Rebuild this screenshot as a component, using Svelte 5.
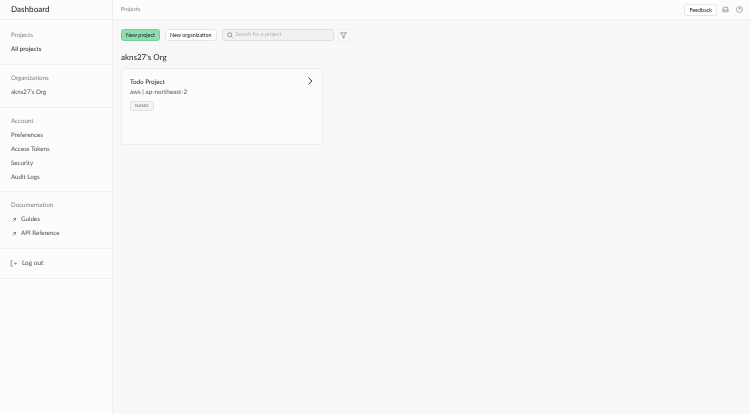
<script>
  const sections = [
    { title: 'Projects', items: [{ label: 'All projects', active: true }] },
    { title: 'Organizations', items: [{ label: "akns27's Org" }] },
    {
      title: 'Account',
      items: [{ label: 'Preferences' }, { label: 'Access Tokens' }, { label: 'Security' }, { label: 'Audit Logs' }],
    },
    {
      title: 'Documentation',
      items: [
        { label: 'Guides', external: true },
        { label: 'API Reference', external: true },
      ],
    },
  ]
</script>

<div class="layout">
  <aside class="sidebar">
    <div class="brand">Dashboard</div>
    {#each sections as section (section.title)}
      <section class="nav-section">
        <div class="nav-title">{section.title}</div>
        {#each section.items as item (item.label)}
          <div class="nav-item" class:active={item.active}>
            {#if item.external}
              <svg class="ext" width="4" height="4" viewBox="0 0 10 10" fill="none" stroke="currentColor" stroke-width="1.6">
                <path d="M1 9 9 1M3 1h6v6" />
              </svg>
            {/if}
            {item.label}
          </div>
        {/each}
      </section>
    {/each}
    <section class="logout">
      <svg width="7" height="7" viewBox="0 0 24 24" fill="none" stroke="currentColor" stroke-width="2">
        <path d="M9 3H4v18h5M14 12h8M18 8l4 4-4 4" />
      </svg>
      <span>Log out</span>
    </section>
  </aside>

  <div class="content">
    <header class="topbar">
      <span class="crumb">Projects</span>
      <div class="top-actions">
        <button class="btn feedback">Feedback</button>
        <svg width="7" height="7" viewBox="0 0 24 24" fill="none" stroke="#707070" stroke-width="2">
          <path d="M3 13 6 4h12l3 9v7H3zM3 13h6l1 3h4l1-3h6" />
        </svg>
        <svg width="7" height="7" viewBox="0 0 24 24" fill="none" stroke="#707070" stroke-width="2">
          <circle cx="12" cy="12" r="10" />
          <path d="M9.500 9.500a2.500 2.500 0 1 1 3.500 2.300c-.7.4-1 .9-1 1.700M12 17h.01" />
        </svg>
      </div>
    </header>

    <main class="page">
      <div class="toolbar">
        <button class="btn primary">New project</button>
        <button class="btn">New organization</button>
        <div class="search">
          <svg width="6" height="6" viewBox="0 0 24 24" fill="none" stroke="#666" stroke-width="2.400">
            <circle cx="11" cy="11" r="8" />
            <path d="m17 17 5 5" />
          </svg>
          <span>Search for a project</span>
        </div>
        <button class="btn filter" aria-label="Filter">
          <svg width="7" height="7" viewBox="0 0 24 24" fill="none" stroke="#555" stroke-width="2">
            <path d="M2 3h20l-8 9.500V21l-4-2v-6.500z" />
          </svg>
        </button>
      </div>

      <h2 class="org">akns27's Org</h2>

      <div class="card">
        <div class="card-head">
          <div class="card-name">Todo Project</div>
          <svg class="chevron" width="6" height="8" viewBox="0 0 6 8" fill="none" stroke="#333" stroke-width="1">
            <path d="m1.500.6 3.400 3.400-3.400 3.400" />
          </svg>
        </div>
        <div class="card-region">aws | ap-northeast-2</div>
        <span class="badge">NANO</span>
      </div>
    </main>
  </div>
</div>

<style>
  :global(body) {
    font-family: Lato, "Liberation Sans", sans-serif;
    color: #1c1c1c;
    text-rendering: geometricPrecision;
  }
  .layout {
    display: flex;
    width: 750px;
    height: 414px;
    overflow: hidden;
    background: #f8f8f8;
    /* the source is a downscaled capture, so everything is a little soft */
    filter: blur(0.3px);
  }
  .sidebar {
    width: 113px;
    flex: none;
    background: #fcfcfc;
    border-right: 1px solid #efefef;
    box-sizing: border-box;
  }
  .brand {
    height: 20px;
    line-height: 19px;
    padding-left: 11px;
    font-size: 8.100px;
    box-sizing: border-box;
    border-bottom: 1px solid #efefef;
  }
  .nav-section {
    padding: 6.500px 0 7.500px;
    border-bottom: 1px solid #efefef;
  }
  .nav-section:nth-child(2) {
    padding-top: 8.500px;
  }
  .nav-section:nth-child(4) {
    padding-bottom: 6.500px;
  }
  .nav-title,
  .nav-item {
    height: 14px;
    line-height: 14px;
    padding-left: 11px;
    font-size: 6.200px;
    display: flex;
    align-items: center;
    white-space: nowrap;
  }
  .nav-title {
    color: #7e7e7e;
  }
  .nav-item {
    color: #4f4f4f;
  }
  .nav-item.active {
    color: #1c1c1c;
  }
  .ext {
    margin: 0 5px 0 1px;
    color: #555;
  }
  .logout {
    display: flex;
    align-items: center;
    gap: 5px;
    height: 30px;
    padding-left: 10px;
    font-size: 6.500px;
    color: #4f4f4f;
    box-sizing: border-box;
    border-bottom: 1px solid #efefef;
  }
  .content {
    flex: 1;
    min-width: 0;
  }
  .topbar {
    height: 20px;
    box-sizing: border-box;
    border-bottom: 1px solid #efefef;
    display: flex;
    align-items: center;
    justify-content: space-between;
    padding: 0 7px 0 8px;
    background: #fcfcfc;
  }
  .crumb {
    font-size: 5.500px;
    color: #7e7e7e;
  }
  .top-actions {
    display: flex;
    align-items: center;
    gap: 7px;
  }
  .feedback {
    margin-right: -2px;
  }
  .btn {
    font: inherit;
    font-size: 5.400px;
    height: 12px;
    padding: 0 4px;
    border: 1px solid #e6e6e6;
    border-radius: 2.500px;
    background: #fff;
    color: #1c1c1c;
    white-space: nowrap;
    display: flex;
    align-items: center;
    justify-content: center;
  }
  .btn.primary {
    background: #8fdcae;
    border-color: #74cf9a;
  }
  .page {
    padding: 9px 8px;
  }
  .toolbar {
    display: flex;
    align-items: center;
    gap: 5px;
  }
  .search {
    width: 112px;
    height: 12px;
    box-sizing: border-box;
    display: flex;
    align-items: center;
    gap: 3px;
    padding-left: 4px;
    background: #f1f1f1;
    border: 1px solid #dedede;
    border-radius: 2.500px;
    font-size: 5.400px;
    color: #b0b0b0;
  }
  .filter {
    width: 12px;
    padding: 0;
    margin-left: -1px;
    background: #fafafa;
    border-color: #eee;
  }
  .org {
    font-size: 8px;
    font-weight: 400;
    margin: 10px 0 5px;
    line-height: 12px;
  }
  .card {
    width: 202px;
    height: 77px;
    box-sizing: border-box;
    background: #fcfcfc;
    border: 1px solid #ececec;
    border-radius: 2.500px;
    padding: 8px 8px;
  }
  .card-head {
    display: flex;
    justify-content: space-between;
    align-items: center;
    font-size: 6.300px;
    height: 10px;
    color: #1c1c1c;
  }
  .chevron {
    margin: -2px 1px 0 0;
  }
  .card-region {
    font-size: 6.300px;
    color: #555;
    line-height: 10px;
    margin-top: 1px;
  }
  .badge {
    display: block;
    width: fit-content;
    margin-top: 2.500px;
    font-size: 4.300px;
    line-height: 8px;
    padding: 0 4px;
    border: 1px solid #e0e0e0;
    border-radius: 2px;
    background: #f5f5f5;
    color: #666;
    letter-spacing: 0.2px;
  }
</style>
